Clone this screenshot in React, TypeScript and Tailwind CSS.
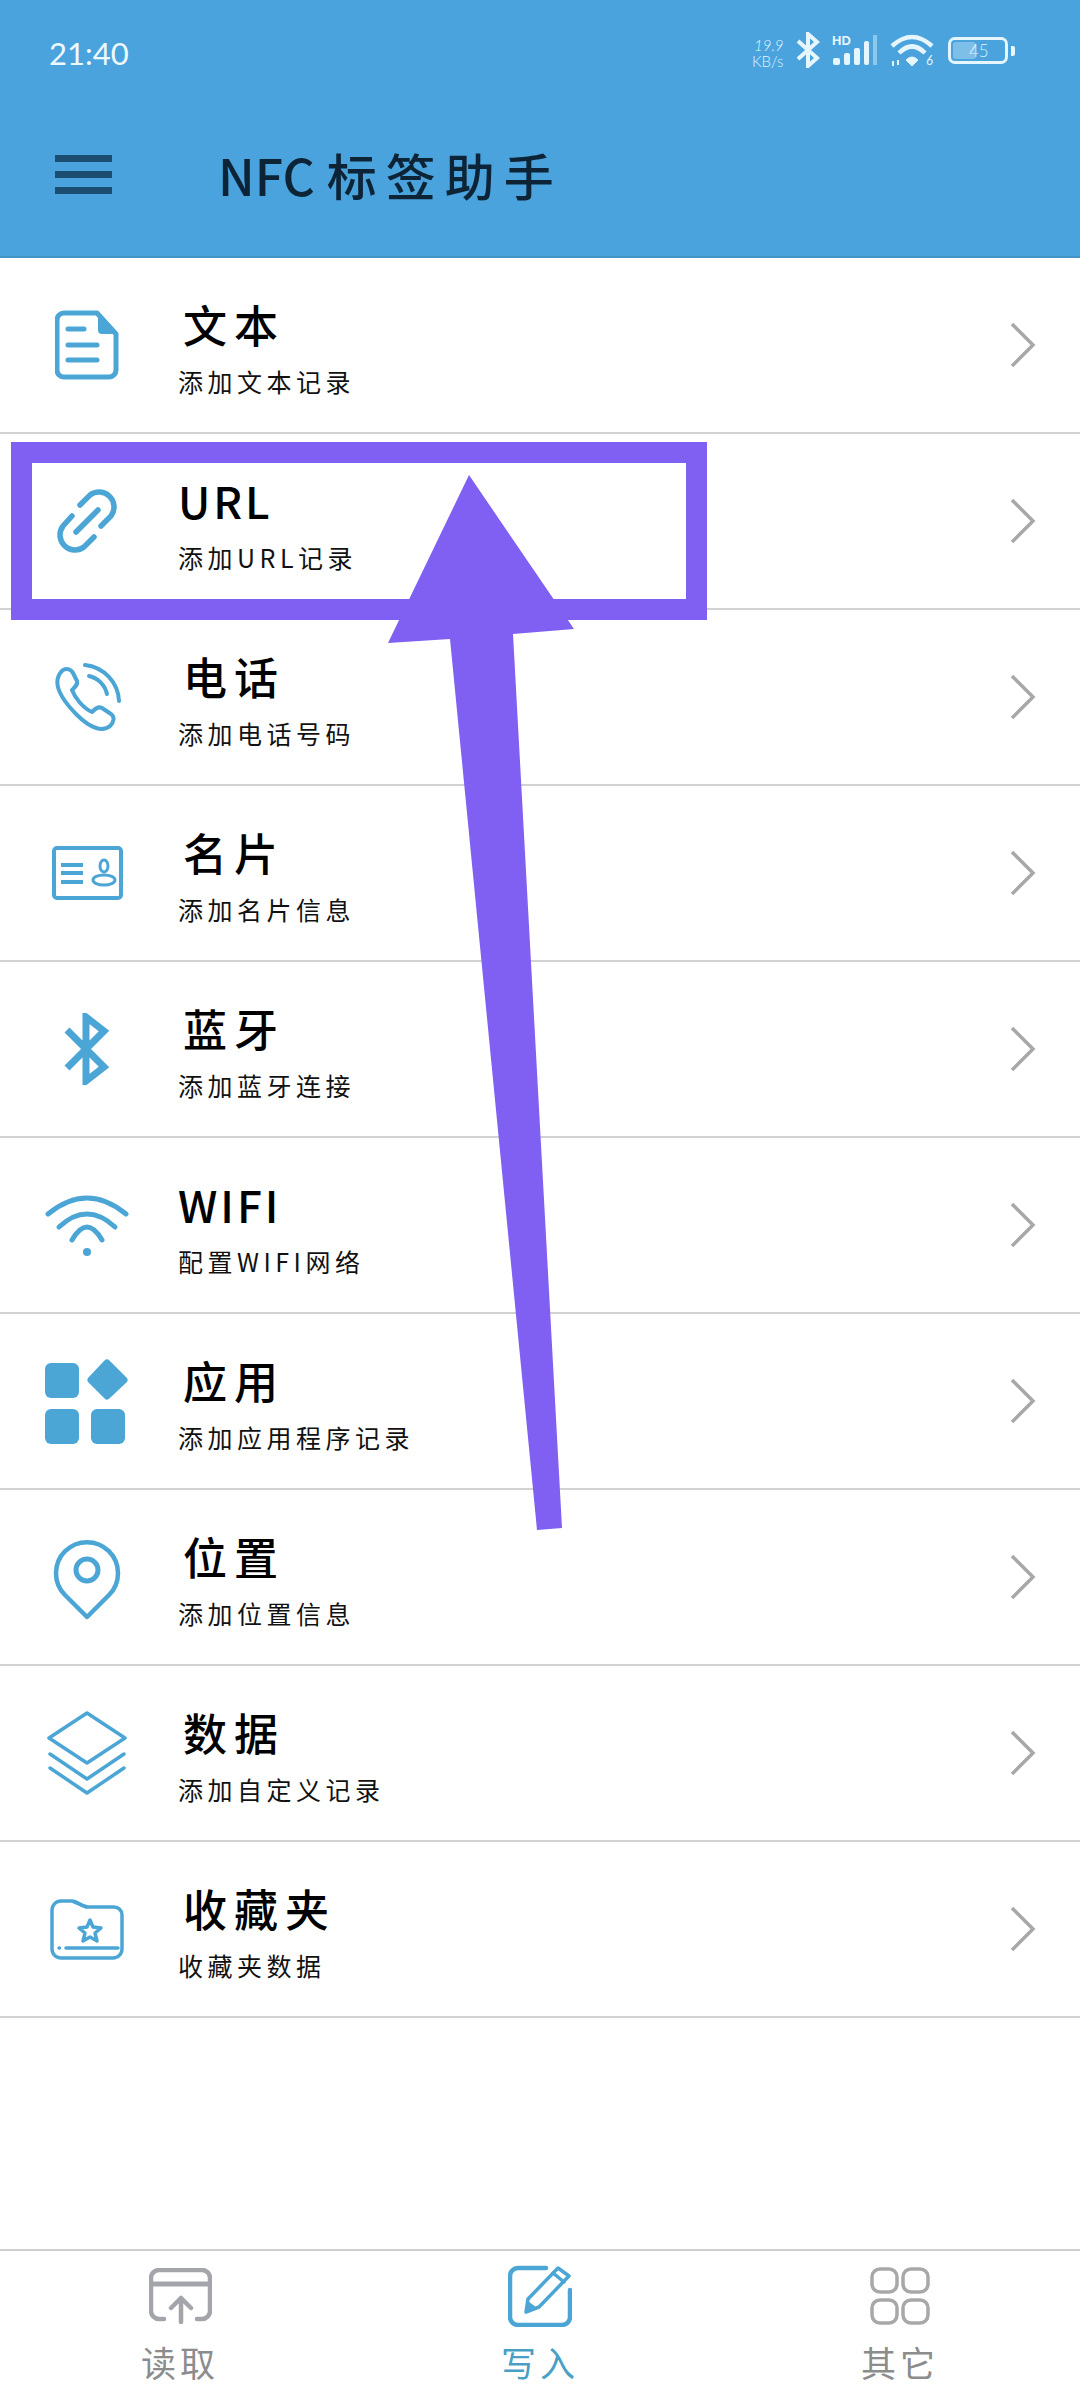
import type { ReactNode } from 'react'

const BLUE = '#4ba6d6'

function DocIcon() {
  return (
    <svg width="64" height="70" viewBox="0 0 64 70" fill="none" stroke={BLUE} strokeWidth="5" strokeLinecap="round" strokeLinejoin="round">
      <path d="M9 3H42L61 24V60A7 7 0 0 1 54 67H9A7 7 0 0 1 2 60V10A7 7 0 0 1 9 3Z" />
      <path d="M44 5L59 23H47A3 3 0 0 1 44 20Z" fill={BLUE} strokeWidth="2" />
      <path d="M13 19H29M13 35H42M13 50H42" />
    </svg>
  )
}

function LinkIcon() {
  return (
    <svg width="68" height="68" viewBox="0 0 68 68" fill="none" stroke={BLUE} strokeWidth="5.5" strokeLinecap="round">
      <path d="M27 18L37 8A15 15 0 0 1 58 29L48 39" />
      <path d="M41 50L31 60A15 15 0 0 1 10 39L19 29" />
      <path d="M23 45L45 23" />
    </svg>
  )
}

function PhoneIcon() {
  return (
    <svg width="68" height="68" viewBox="0 0 68 68" fill="none" stroke={BLUE} strokeWidth="4" strokeLinecap="round" strokeLinejoin="round">
      <path d="M8 9C12 4 18 6 20 10L24 18C25 22 22 24 19 27C22 35 30 45 39 49C42 46 45 43 49 45L58 51C62 54 61 59 57 63C50 69 38 66 24 52C8 36 -1 20 8 9Z" />
      <path d="M32 2A38 38 0 0 1 66 38" />
      <path d="M36 13A24 24 0 0 1 54 31" />
    </svg>
  )
}

function CardIcon() {
  return (
    <svg width="71" height="54" viewBox="0 0 71 54" fill="none" stroke={BLUE} strokeWidth="4" strokeLinejoin="round">
      <rect x="2" y="2" width="67" height="50" rx="3" />
      <path d="M9 19H31M9 27H31M9 36H31" />
      <ellipse cx="52" cy="20" rx="4" ry="6" strokeWidth="3" />
      <ellipse cx="52" cy="34" rx="11" ry="5" strokeWidth="3" />
    </svg>
  )
}

function BluetoothIcon() {
  return (
    <svg width="46" height="72" viewBox="0 0 46 72" fill="none" stroke={BLUE} strokeWidth="7">
      <path d="M3 17L40 54L22 68V4L40 18L3 55" />
    </svg>
  )
}

function WifiIcon() {
  return (
    <svg width="84" height="62" viewBox="0 0 84 62" fill="none" stroke={BLUE} strokeWidth="5" strokeLinecap="round">
      <path d="M3 20Q42 -12 81 20" />
      <path d="M14 33Q42 7 70 33" />
      <path d="M27 46Q42 20 57 46" />
      <circle cx="42" cy="58" r="4" fill={BLUE} stroke="none" />
    </svg>
  )
}

function AppsIcon() {
  return (
    <svg width="84" height="86" viewBox="0 0 84 86" fill={BLUE}>
      <rect x="0" y="5" width="34" height="35" rx="6" />
      <rect x="0" y="51" width="34" height="35" rx="6" />
      <rect x="46" y="51" width="34" height="35" rx="6" />
      <path d="M62 5L79 22L62 38L46 22Z" stroke={BLUE} strokeWidth="7" strokeLinejoin="round" />
    </svg>
  )
}

function PinIcon() {
  return (
    <svg width="68" height="85" viewBox="0 0 68 85" fill="none" stroke={BLUE} strokeWidth="4.5" strokeLinejoin="round">
      <path d="M34 82L12 60A31 31 0 1 1 56 60Z" />
      <circle cx="34" cy="35" r="11" strokeWidth="5" />
    </svg>
  )
}

function LayersIcon() {
  return (
    <svg width="80" height="84" viewBox="0 0 80 84" fill="none" stroke={BLUE} strokeWidth="3.5" strokeLinecap="round" strokeLinejoin="round">
      <path d="M40 2L78 27L40 52L2 27Z" />
      <path d="M3 43L40 68L77 43" />
      <path d="M3 57L40 82L77 57" />
    </svg>
  )
}

function FolderIcon() {
  return (
    <svg width="74" height="61" viewBox="0 0 74 61" fill="none" stroke={BLUE} strokeWidth="3.5" strokeLinecap="round" strokeLinejoin="round">
      <path d="M2 11A9 9 0 0 1 11 2H22C28 2 31 8 38 8H64A8 8 0 0 1 72 16V50A9 9 0 0 1 63 59H11A9 9 0 0 1 2 50Z" />
      <path d="M24 3L36 8" />
      <path d="M9 49H9.5M16 49H68" />
      <path d="M40 21L43 28L51 29L45 34L47 42L40 38L33 42L35 34L29 29L37 28Z" />
    </svg>
  )
}

function ReadIcon() {
  return (
    <svg width="63" height="56" viewBox="0 0 63 56" fill="none" stroke="#a3a5ab" strokeWidth="4.5" strokeLinecap="round" strokeLinejoin="round">
      <path d="M15 51H10A8 8 0 0 1 2 43V10A8 8 0 0 1 10 2H53A8 8 0 0 1 61 10V43A8 8 0 0 1 53 51H48" />
      <path d="M2 16H61" strokeWidth="5" />
      <path d="M32 54V30M22 40L32 30L42 40" />
    </svg>
  )
}

function WriteIcon() {
  return (
    <svg width="64" height="62" viewBox="0 0 64 62" fill="none" stroke={BLUE} strokeWidth="4.5" strokeLinecap="round" strokeLinejoin="round">
      <path d="M38 3H10A8 8 0 0 0 2 11V52A8 8 0 0 0 10 60H54A8 8 0 0 0 62 52V25" />
      <path d="M18 47L20 34L50 3L61 11L31 42Z" strokeWidth="3.5" />
      <path d="M45 8L56 17" strokeWidth="3.5" />
      <path d="M18 47L20 36L29 43Z" fill={BLUE} stroke="none" />
    </svg>
  )
}

function OtherIcon() {
  return (
    <svg width="60" height="58" viewBox="0 0 60 58" fill="none" stroke="#a8a8a8" strokeWidth="3.5">
      <rect x="2" y="2" width="25" height="23" rx="8" />
      <rect x="33" y="2" width="25" height="23" rx="8" />
      <rect x="2" y="33" width="25" height="23" rx="8" />
      <rect x="33" y="33" width="25" height="23" rx="8" />
    </svg>
  )
}

function StatusIcons() {
  return (
    <div className="flex items-start text-[#dff3ff]">
      <div className="mt-[5px] w-[40px] font-['Lato',sans-serif] text-[15px] leading-[16px] font-light">
        <div className="pl-[2px] italic">19.9</div>
        <div>KB/s</div>
      </div>
      {/* bluetooth */}
      <svg className="ml-[4px]" width="24" height="36" viewBox="0 0 24 36" fill="none" stroke="#e6f6ff" strokeWidth="4">
        <path d="M2 9L21 26L12 34V2L21 10L2 27" />
      </svg>
      {/* signal */}
      <div className="relative ml-[12px] h-[36px] w-[46px]">
        <span className="absolute top-[2px] left-0 font-['Liberation_Sans',sans-serif] text-[13px] leading-[13px] font-bold text-[#e6f6ff]">HD</span>
        <svg className="absolute top-0 left-0" width="46" height="36" viewBox="0 0 46 36" fill="#e6f6ff">
          <rect x="1" y="26" width="7" height="7" rx="2" />
          <rect x="12" y="21" width="6" height="12" rx="2" />
          <rect x="22" y="16" width="6" height="17" rx="2" />
          <rect x="32" y="9" width="5" height="24" rx="2" />
          <rect x="41" y="3" width="4" height="30" fill="#8cc8ec" />
        </svg>
      </div>
      {/* wifi */}
      <div className="relative ml-[12px] h-[36px] w-[46px]">
        <svg className="absolute top-0 left-0" width="46" height="36" viewBox="0 0 46 36" fill="none" stroke="#e6f6ff" strokeWidth="4.5">
          <path d="M2 14Q22 -4 42 14" />
          <path d="M9 21Q22 8 35 21" />
          <path d="M16 28L22 34L28 28Q22 22 16 28Z" fill="#e6f6ff" strokeWidth="1" />
          <path d="M3 29V34M8 28V33" strokeWidth="2" />
        </svg>
        <span className="absolute top-[22px] left-[36px] font-['Lato',sans-serif] text-[13px] leading-[13px] italic">6</span>
      </div>
      {/* battery */}
      <div className="mt-[5px] ml-[12px] flex items-center">
        <div className="relative h-[27px] w-[60px] rounded-[7px] border-[3px] border-[#e6f6ff] p-[2px]">
          <div className="h-full w-[23px] rounded-[3px] bg-[#7dbfe9]" />
          <span className="absolute top-[2px] left-[18px] font-['Lato',sans-serif] text-[17px] leading-[17px] font-light">45</span>
        </div>
        <div className="ml-[3px] h-[10px] w-[4px] rounded-r-[2px] bg-[#e6f6ff]" />
      </div>
    </div>
  )
}

type RowItem = { title: string; sub: string; icon: ReactNode; latin?: boolean }

const rows: RowItem[] = [
  { title: '文本', sub: '添加文本记录', icon: <DocIcon /> },
  { title: 'URL', sub: '添加URL记录', icon: <LinkIcon />, latin: true },
  { title: '电话', sub: '添加电话号码', icon: <PhoneIcon /> },
  { title: '名片', sub: '添加名片信息', icon: <CardIcon /> },
  { title: '蓝牙', sub: '添加蓝牙连接', icon: <BluetoothIcon /> },
  { title: 'WIFI', sub: '配置WIFI网络', icon: <WifiIcon />, latin: true },
  { title: '应用', sub: '添加应用程序记录', icon: <AppsIcon /> },
  { title: '位置', sub: '添加位置信息', icon: <PinIcon /> },
  { title: '数据', sub: '添加自定义记录', icon: <LayersIcon /> },
  { title: '收藏夹', sub: '收藏夹数据', icon: <FolderIcon /> },
]

function Row({ item }: { item: RowItem }) {
  return (
    <div className="flex h-[176px] items-center border-b-2 border-[#d2d2d2]">
      <div className="flex w-[174px] shrink-0 justify-center">{item.icon}</div>
      <div className="ml-[4px] flex h-full flex-1 flex-col">
        <div className={`mt-[38px] h-[56px] text-[44px] leading-[56px] font-medium text-black ${item.latin ? 'tracking-[3px]' : 'pl-[5px] tracking-[7px]'}`}>{item.title}</div>
        <div className="mt-[14px] text-[25px] leading-[30px] tracking-[4.5px] text-[#111]">{item.sub}</div>
      </div>
      <svg className="mr-[44px]" width="26" height="46" viewBox="0 0 26 46" fill="none" stroke="#a8a8a8" strokeWidth="3.5">
        <path d="M2 2L23 23L2 44" />
      </svg>
    </div>
  )
}

function NavItem({ label, active, icon }: { label: string; active?: boolean; icon: ReactNode }) {
  return (
    <div className="flex flex-col items-center">
      <div className="flex h-[62px] items-center">{icon}</div>
      <div className={`mt-[13px] text-[35px] leading-[44px] tracking-[4px] ${active ? 'text-[#4a9fc6]' : 'text-[#8c8c8c]'}`}>{label}</div>
    </div>
  )
}

export default function App() {
  return (
    <div className="relative flex h-[2400px] w-[1080px] flex-col overflow-hidden bg-white font-['Noto_Sans_CJK_SC','Noto_Sans',sans-serif]">
      <header className="h-[258px] shrink-0 border-b-2 border-[#4494c6] bg-[#4aa3dc]">
        <div className="flex h-[106px] items-start justify-between pt-[34px] pr-[65px] pl-[49px]">
          <span className="font-['Lato',sans-serif] text-[31px] leading-[38px] text-[#eef9ff]">21:40</span>
          <div className="-mt-[2px]">
            <StatusIcons />
          </div>
        </div>
        <div className="flex h-[136px] items-center pl-[55px]">
          <div className="flex w-[57px] flex-col gap-[9px]">
            <div className="h-[7px] bg-[#1c4e72]" />
            <div className="h-[7px] bg-[#1c4e72]" />
            <div className="h-[7px] bg-[#1c4e72]" />
          </div>
          <h1 className="ml-[106px] text-[50px] leading-[64px] font-medium tracking-[9px] text-[#0c2436]">
            <span className="mr-[12px] tracking-[0px]">NFC</span>标签助手
          </h1>
        </div>
      </header>

      <div className="flex-1">
        {rows.map((item) => (
          <Row key={item.title} item={item} />
        ))}
      </div>

      <nav className="grid h-[151px] shrink-0 grid-cols-3 border-t-2 border-[#cfcfcf] pt-[14px]">
        <NavItem label="读取" icon={<ReadIcon />} />
        <NavItem label="写入" active icon={<WriteIcon />} />
        <NavItem label="其它" icon={<OtherIcon />} />
      </nav>

      {/* annotation drawn over the screenshot */}
      <div className="absolute top-[442px] left-[11px] h-[178px] w-[696px] border-[21px] border-[#8060f2]" />
      <svg className="absolute top-0 left-0" width="1080" height="2400" viewBox="0 0 1080 2400" fill="#8060f2">
        <path d="M469 475L574 629L513 634L562 1528L537 1530L450 639L388 643Z" />
      </svg>
    </div>
  )
}
